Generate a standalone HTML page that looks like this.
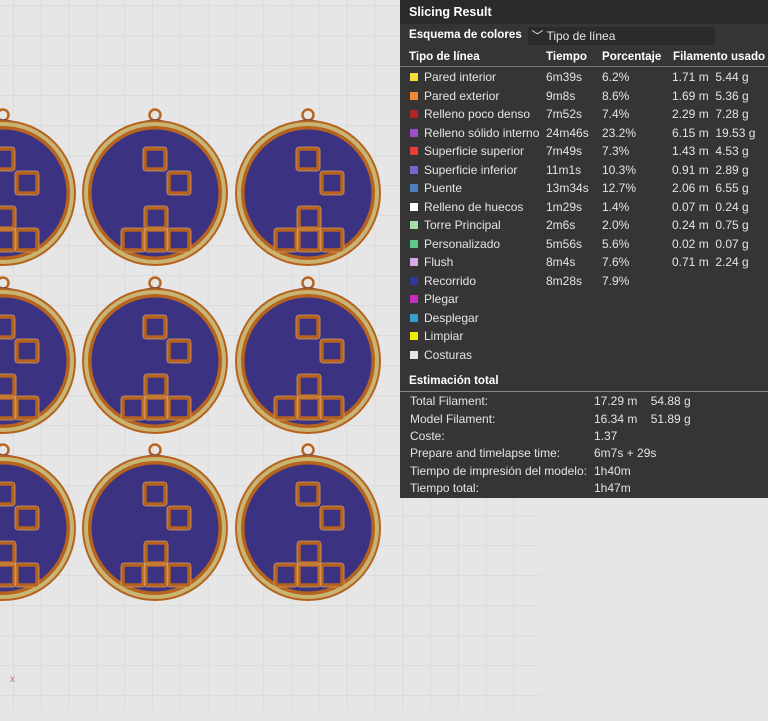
<!DOCTYPE html>
<html><head><meta charset="utf-8"><style>
html,body{margin:0;padding:0;width:768px;height:721px;overflow:hidden;background:#e6e6e6;font-family:"Liberation Sans",sans-serif}
#grid{position:absolute;left:0;top:0;width:540px;height:710px;
background-image:linear-gradient(to right,#dcdcdc 1px,transparent 1px),linear-gradient(to bottom,#dcdcdc 1px,transparent 1px);
background-size:27.8px 30px;background-position:13px 5px}
svg{position:absolute;left:0;top:0}
#panel{position:absolute;left:400px;top:0;width:368px;height:498px;background:#353535;color:#e4e4e4;font-size:12px}
.hd{height:24px;background:#2a2a2a;font-weight:bold;font-size:12.5px;line-height:24px;padding-left:9px;color:#fff}
.r{position:absolute;left:0;width:368px;height:18.5px;line-height:18.5px;white-space:nowrap}
.r span{position:absolute}
.sw{width:8px;height:8px;left:10px;top:5px}
.b{font-weight:bold;color:#fff;font-size:11.6px}
</style></head><body>
<div id="grid"></div>
<svg width="540" height="721" viewBox="0 0 540 721">
<defs>
<g id="m">
<circle cx="0" cy="-78" r="5.5" fill="none" stroke="#b8651f" stroke-width="2.5"/>
<path d="M-14,-71 Q0,-76 14,-71 L8,-66 L-8,-66Z" fill="#3b3282"/>
<circle r="73" fill="#b5631e"/>
<circle r="71" fill="#c8b573"/>
<circle r="67" fill="#b5631e"/>
<circle r="63.5" fill="#3b3282"/>
<g fill="none" stroke="#b5631e" stroke-width="3.5">
<rect x="-10" y="-44" width="20" height="20" rx="2"/>
<rect x="14" y="-20" width="20" height="20" rx="2"/>
<rect x="-9" y="15" width="20" height="20" rx="2"/>
<rect x="-32" y="37" width="20" height="20" rx="2"/>
<rect x="-9" y="37" width="20" height="20" rx="2"/>
<rect x="14" y="37" width="20" height="20" rx="2"/>
</g>
<g fill="none" stroke="#d9a060" stroke-width="0.8">
<rect x="-12" y="-46" width="24" height="24" rx="3"/>
<rect x="12" y="-22" width="24" height="24" rx="3"/>
<rect x="-11" y="13" width="24" height="24" rx="3"/>
<rect x="-34" y="35" width="24" height="24" rx="3"/>
<rect x="-11" y="35" width="24" height="24" rx="3"/>
<rect x="12" y="35" width="24" height="24" rx="3"/>
</g>
</g>
</defs>
<use href="#m" x="3" y="193"/><use href="#m" x="155" y="193"/><use href="#m" x="308" y="193"/>
<use href="#m" x="3" y="361"/><use href="#m" x="155" y="361"/><use href="#m" x="308" y="361"/>
<use href="#m" x="3" y="528"/><use href="#m" x="155" y="528"/><use href="#m" x="308" y="528"/>
<text x="10" y="682" font-size="10" fill="#c07070" font-family="Liberation Sans">x</text>
</svg>
<div id="panel">
<div class="hd">Slicing Result</div>
<div class="r b" style="top:26px"><span style="left:9px">Esquema de colores</span></div>
<div style="position:absolute;left:128px;top:27px;width:187px;height:18px;background:#2b2b2b;line-height:18px;font-size:12px">&nbsp;﹀ Tipo de línea</div>
<div class="r b" style="top:48px"><span style="left:9px">Tipo de línea</span><span style="left:146px">Tiempo</span><span style="left:202px">Porcentaje</span><span style="left:273px">Filamento usado</span></div>
<div style="position:absolute;left:0;top:66px;width:368px;height:1px;background:#777"></div>
<div class="r" style="top:68px"><span class="sw" style="background:#f5dd3f"></span><span style="left:24px">Pared interior</span><span style="left:146px">6m39s</span><span style="left:202px">6.2%</span><span style="left:272px">1.71 m&nbsp; 5.44 g</span></div>
<div class="r" style="top:86.5px"><span class="sw" style="background:#f5873a"></span><span style="left:24px">Pared exterior</span><span style="left:146px">9m8s</span><span style="left:202px">8.6%</span><span style="left:272px">1.69 m&nbsp; 5.36 g</span></div>
<div class="r" style="top:105px"><span class="sw" style="background:#b22525"></span><span style="left:24px">Relleno poco denso</span><span style="left:146px">7m52s</span><span style="left:202px">7.4%</span><span style="left:272px">2.29 m&nbsp; 7.28 g</span></div>
<div class="r" style="top:123.5px"><span class="sw" style="background:#9a4fc8"></span><span style="left:24px">Relleno sólido interno</span><span style="left:146px">24m46s</span><span style="left:202px">23.2%</span><span style="left:272px">6.15 m&nbsp; 19.53 g</span></div>
<div class="r" style="top:142px"><span class="sw" style="background:#ea3b3b"></span><span style="left:24px">Superficie superior</span><span style="left:146px">7m49s</span><span style="left:202px">7.3%</span><span style="left:272px">1.43 m&nbsp; 4.53 g</span></div>
<div class="r" style="top:160.5px"><span class="sw" style="background:#7565d0"></span><span style="left:24px">Superficie inferior</span><span style="left:146px">11m1s</span><span style="left:202px">10.3%</span><span style="left:272px">0.91 m&nbsp; 2.89 g</span></div>
<div class="r" style="top:179px"><span class="sw" style="background:#4d7fc0"></span><span style="left:24px">Puente</span><span style="left:146px">13m34s</span><span style="left:202px">12.7%</span><span style="left:272px">2.06 m&nbsp; 6.55 g</span></div>
<div class="r" style="top:197.5px"><span class="sw" style="background:#ffffff"></span><span style="left:24px">Relleno de huecos</span><span style="left:146px">1m29s</span><span style="left:202px">1.4%</span><span style="left:272px">0.07 m&nbsp; 0.24 g</span></div>
<div class="r" style="top:216px"><span class="sw" style="background:#a6e0a6"></span><span style="left:24px">Torre Principal</span><span style="left:146px">2m6s</span><span style="left:202px">2.0%</span><span style="left:272px">0.24 m&nbsp; 0.75 g</span></div>
<div class="r" style="top:234.5px"><span class="sw" style="background:#5ec98a"></span><span style="left:24px">Personalizado</span><span style="left:146px">5m56s</span><span style="left:202px">5.6%</span><span style="left:272px">0.02 m&nbsp; 0.07 g</span></div>
<div class="r" style="top:253px"><span class="sw" style="background:#d6a8e8"></span><span style="left:24px">Flush</span><span style="left:146px">8m4s</span><span style="left:202px">7.6%</span><span style="left:272px">0.71 m&nbsp; 2.24 g</span></div>
<div class="r" style="top:271.5px"><span class="sw" style="background:#2e3a9a"></span><span style="left:24px">Recorrido</span><span style="left:146px">8m28s</span><span style="left:202px">7.9%</span></div>
<div class="r" style="top:290px"><span class="sw" style="background:#c52ec0"></span><span style="left:24px">Plegar</span></div>
<div class="r" style="top:308.5px"><span class="sw" style="background:#3aa0d0"></span><span style="left:24px">Desplegar</span></div>
<div class="r" style="top:327px"><span class="sw" style="background:#f0f000"></span><span style="left:24px">Limpiar</span></div>
<div class="r" style="top:345.5px"><span class="sw" style="background:#e4e4e4"></span><span style="left:24px">Costuras</span></div>
<div class="r b" style="top:372px"><span style="left:9px">Estimación total</span></div>
<div style="position:absolute;left:0;top:391px;width:368px;height:1px;background:#888"></div>
<div class="r" style="top:392px"><span style="left:10px">Total Filament:</span><span style="left:194px">17.29 m&nbsp;&nbsp;&nbsp; 54.88 g</span></div>
<div class="r" style="top:409.5px"><span style="left:10px">Model Filament:</span><span style="left:194px">16.34 m&nbsp;&nbsp;&nbsp; 51.89 g</span></div>
<div class="r" style="top:427px"><span style="left:10px">Coste:</span><span style="left:194px">1.37</span></div>
<div class="r" style="top:444px"><span style="left:10px">Prepare and timelapse time:</span><span style="left:194px">6m7s + 29s</span></div>
<div class="r" style="top:461.5px"><span style="left:10px">Tiempo de impresión del modelo:</span><span style="left:194px">1h40m</span></div>
<div class="r" style="top:478.5px"><span style="left:10px">Tiempo total:</span><span style="left:194px">1h47m</span></div>
</div>
</body></html>
